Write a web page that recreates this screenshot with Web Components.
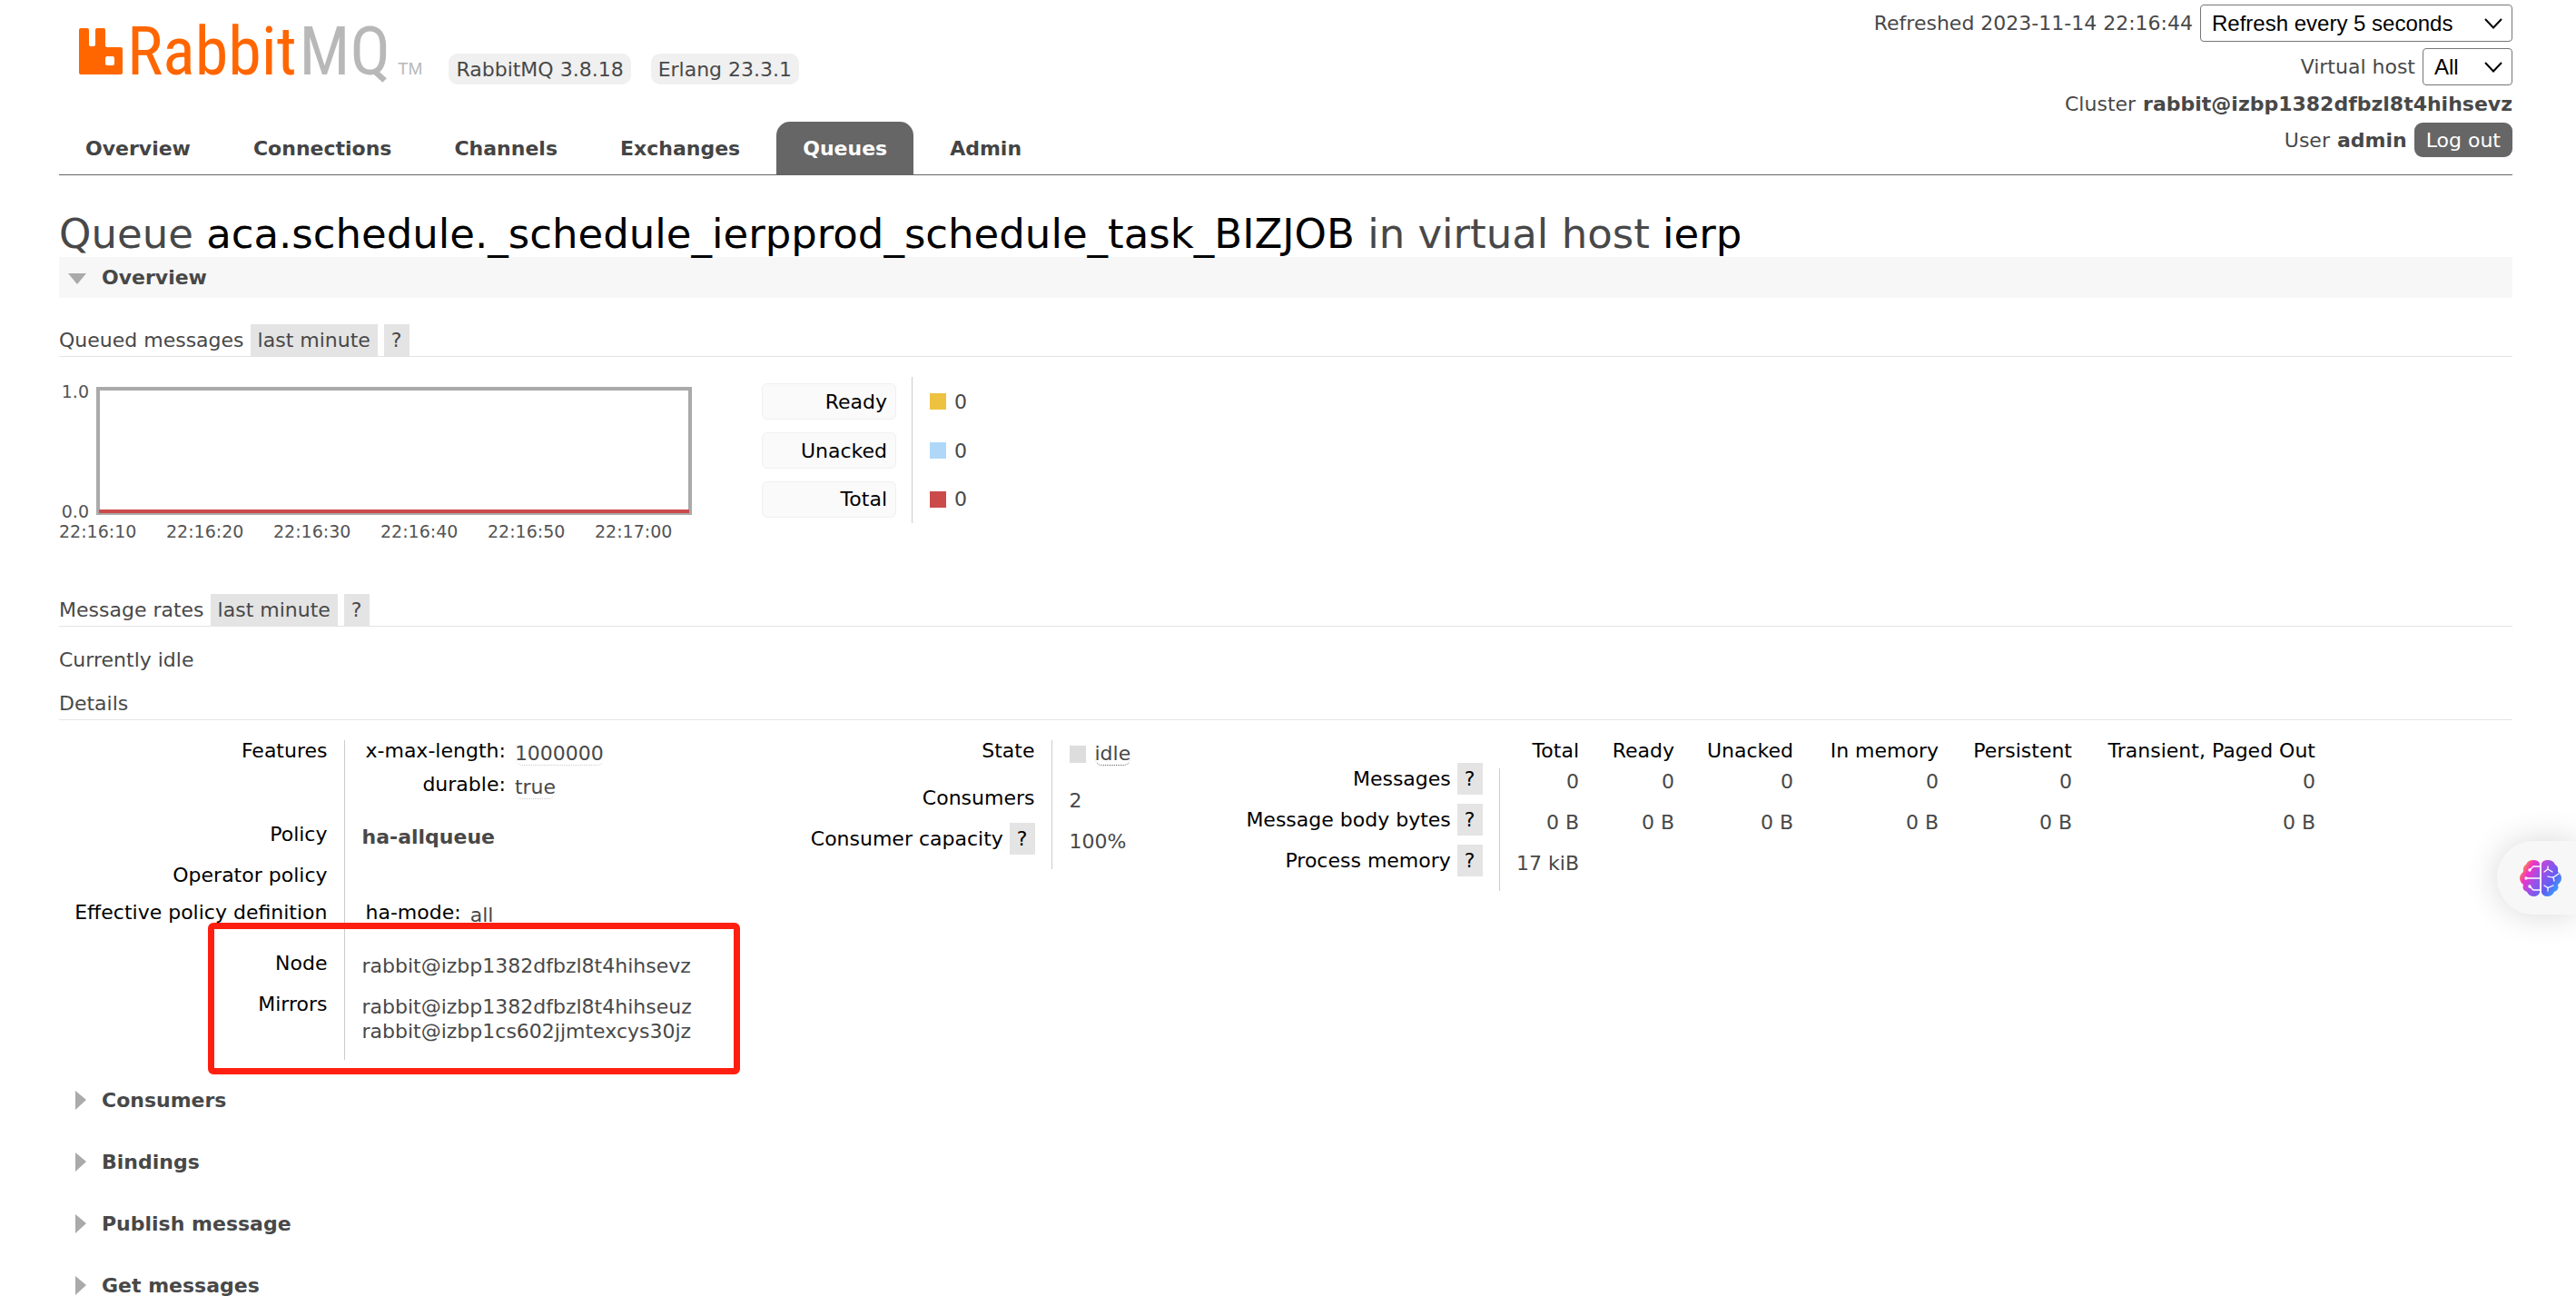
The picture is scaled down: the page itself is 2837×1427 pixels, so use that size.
<!DOCTYPE html>
<html lang="en">
<head>
<meta charset="utf-8">
<title>RabbitMQ Management</title>
<style>
html { scrollbar-width: none; }
body { margin: 0; background: #fff; color: #484848; font: 22px/27px "DejaVu Sans", Verdana, sans-serif; }
</style>
</head>
<body>
<rmq-page></rmq-page>
<rmq-assistant></rmq-assistant>

<script>
const define = (name, html) => {
  const tpl = document.createElement('template');
  tpl.innerHTML = html;
  customElements.define(name, class extends HTMLElement {
    constructor() {
      super();
      this.attachShadow({ mode: 'open' }).appendChild(tpl.content.cloneNode(true));
    }
  });
};

/* Small shared parts */
define('rmq-help', `
<style>
  :host { display: inline-block; margin: -6px 0; }
  button { display: block; margin: 0; padding: 4px 8px; border: 0; background: #e4e4e4; color: inherit; font: inherit; line-height: 27px; }
</style>
<button type="button"><slot>?</slot></button>`);

define('rmq-pill', `
<style>
  :host { display: block; padding: 4px 8px 3px; border-radius: 10px; background: #f0f0f0; }
</style>
<slot></slot>`);

define('rmq-tab', `
<style>
  :host { display: block; }
  a { display: block; padding: 16px 29px 15px; border-radius: 15px 15px 0 0; color: #444; font-weight: bold; text-decoration: none; }
  :host([selected]) a { background: #666; color: #fff; }
</style>
<a href="#"><slot></slot></a>`);

define('rmq-logo', `
<style>
  :host { display: flex; align-items: baseline; font: 74px/72px "Roboto Condensed", "Open Sans Condensed", sans-serif; color: #f60; }
  svg { width: 48px; height: 51px; margin-right: 5px; }
  span { margin-left: 3px; color: #b8b8b8; }
  small { margin-left: 8px; font: 19px/20px "Liberation Sans", Arial, sans-serif; color: #b8b8b8; }
</style>
<svg viewBox="0 0 48 51" aria-hidden="true"><path fill="#f60" fill-rule="evenodd" d="M2 0H9Q11 0 11 2V18Q11 20 13 20H16Q18 20 18 18V2Q18 0 20 0H27Q29 0 29 2V19Q29 21 31 21H46Q48 21 48 23V49Q48 51 46 51H2Q0 51 0 49V2Q0 0 2 0ZM31 31Q29 31 29 33V39Q29 41 31 41H37Q39 41 39 39V33Q39 31 37 31Z"/></svg>Rabbit<span>MQ</span><small>TM</small>`);

/* Account and refresh controls */
define('rmq-status', `
<style>
  :host { display: flex; flex-direction: column; align-items: flex-end; gap: 7px; padding: 5px 0 19px; }
  label, p { display: flex; align-items: center; gap: 8px; margin: 0; }
  .select { position: relative; width: 99px; }
  .wide { width: 344px; }
  select { display: block; width: 100%; height: 41px; margin: 0; padding: 0 12px; appearance: none; border: 1px solid #767676; border-radius: 4px; background: #fff; color: #000; font: 24px "Liberation Sans", Arial, sans-serif; }
  svg { position: absolute; right: 11px; top: 15px; width: 20px; height: 12px; pointer-events: none; }
  button { height: 38px; margin: 0; padding: 0 13px; border: 0; border-radius: 9px; background: #666; color: #fff; font: inherit; }
</style>
<label>Refreshed 2023-11-14 22:16:44
  <span class="select wide"><select><option>Refresh every 5 seconds</option><option>Refresh every 10 seconds</option><option>Do not refresh</option></select>
  <svg viewBox="0 0 20 12"><path d="M1 1L10 10.5L19 1" fill="none" stroke="#000" stroke-width="2"/></svg></span>
</label>
<label>Virtual host
  <span class="select"><select><option>All</option><option>ierp</option></select>
  <svg viewBox="0 0 20 12"><path d="M1 1L10 10.5L19 1" fill="none" stroke="#000" stroke-width="2"/></svg></span>
</label>
<p>Cluster <b>rabbit@izbp1382dfbzl8t4hihsevz</b></p>
<p>User <b>admin</b> <button type="button">Log out</button></p>`);

define('rmq-header', `
<style>
  :host { display: flex; justify-content: space-between; border-bottom: 1px solid #666; }
  .left { display: flex; flex-direction: column; justify-content: space-between; }
  .brand { display: flex; align-items: flex-end; gap: 22px; padding: 21px 0 0 22px; }
  .brand rmq-logo { margin-right: 7px; }
  nav { display: flex; gap: 11px; }
</style>
<div class="left">
  <div class="brand"><rmq-logo></rmq-logo><rmq-pill>RabbitMQ 3.8.18</rmq-pill><rmq-pill>Erlang 23.3.1</rmq-pill></div>
  <nav>
    <rmq-tab>Overview</rmq-tab><rmq-tab>Connections</rmq-tab><rmq-tab>Channels</rmq-tab><rmq-tab>Exchanges</rmq-tab><rmq-tab selected>Queues</rmq-tab><rmq-tab>Admin</rmq-tab>
  </nav>
</div>
<rmq-status></rmq-status>`);

/* Collapsible section heading */
define('rmq-section', `
<style>
  :host { display: block; }
  h2 { margin: 0; font: inherit; }
  button { display: flex; align-items: center; width: 100%; height: 45px; margin: 0; padding: 0 0 0 10px; border: 0; background: none; color: inherit; font: bold 22px/45px "DejaVu Sans", Verdana, sans-serif; text-align: left; }
  svg { width: 20px; height: 22px; margin-right: 17px; fill: #aaa; }
  .down { display: none; }
  :host([open]) button { background: #f7f7f7; }
  :host([open]) .down { display: block; }
  :host([open]) .right { display: none; }
</style>
<h2><button type="button">
  <svg class="right" viewBox="0 0 20 22"><path d="M8 0L20 10L8 21Z"/></svg>
  <svg class="down" viewBox="0 0 20 22"><path d="M0 6H20L10 18Z"/></svg>
  <slot name="title"></slot>
</button></h2>
<slot></slot>`);

define('rmq-subheading', `
<style>
  :host { display: flex; align-items: center; gap: 7px; height: 35px; border-bottom: 1px solid #e4e4e4; }
</style>
<slot></slot>`);

/* Queue length chart */
define('queue-chart', `
<style>
  :host { display: block; }
  svg { display: block; width: 698px; height: 185px; overflow: visible; }
  text { font: 19px "DejaVu Sans", Verdana, sans-serif; fill: #545454; }
</style>
<svg viewBox="0 0 698 185" role="img" aria-label="Queued messages">
  <text x="33" y="23" text-anchor="end">1.0</text>
  <text x="33" y="155" text-anchor="end">0.0</text>
  <rect x="43" y="13" width="652" height="137" fill="#fff" stroke="#aaa" stroke-width="4"/>
  <path d="M44 148H694" stroke="#cb4b4b" stroke-width="4"/>
  <text x="0" y="177">22:16:10</text><text x="118" y="177">22:16:20</text><text x="236" y="177">22:16:30</text>
  <text x="354" y="177">22:16:40</text><text x="472" y="177">22:16:50</text><text x="590" y="177">22:17:00</text>
</svg>`);

define('queue-legend', `
<style>
  :host { display: block; }
  table { border-collapse: collapse; }
  tr { height: 54px; }
  tr:last-child { height: 53px; }
  th, td { padding: 0; vertical-align: middle; }
  th { padding-right: 17px; border-right: 1px solid #ccc; font-weight: normal; color: #000; }
  button { display: block; width: 148px; height: 40px; margin: 0; padding: 0 9px; border: 1px solid #f0f0f0; border-radius: 6px; background: #fafafa; color: #000; font: inherit; text-align: right; }
  td { padding-left: 19px; }
  td span { display: flex; align-items: center; gap: 9px; }
  i { width: 18px; height: 18px; background: #edc240; }
  .unacked { background: #afd8f8; }
  .total { background: #cb4b4b; }
</style>
<table>
  <tr><th scope="row"><button type="button">Ready</button></th><td><span><i></i>0</span></td></tr>
  <tr><th scope="row"><button type="button">Unacked</button></th><td><span><i class="unacked"></i>0</span></td></tr>
  <tr><th scope="row"><button type="button">Total</button></th><td><span><i class="total"></i>0</span></td></tr>
</table>`);

/* Fact tables */
const factStyles = `
  :host { display: block; }
  table { border-collapse: collapse; line-height: 24px; }
  th, td { padding: 0; vertical-align: top; white-space: nowrap; }
  th { color: #000; font-weight: normal; text-align: right; }
  tbody th { box-sizing: border-box; min-width: 314px; padding-right: 18px; border-right: 1px solid #ccc; }
  tbody td { padding: 3px 0 0 19px; }
  abbr { border-bottom: 1px dotted #ccc; border-radius: 8px; text-decoration: none; }
`;

define('queue-config', `
<style>${factStyles}
  dl { display: grid; grid-template-columns: auto auto; justify-content: start; column-gap: 10px; margin: -3px 0 0 4px; }
  dt { color: #000; text-align: right; }
  dd { margin: 0; padding: 3px 0 10px; }
  .features { height: 92px; } .policy { height: 45px; } .operator { height: 41px; }
  .effective { height: 56px; } .node { height: 45px; } .mirrors { height: 73px; }
  .mirrors td { line-height: 27px; padding-top: 1px; }
</style>
<table><tbody>
  <tr class="features"><th scope="row">Features</th><td><dl><dt>x-max-length:</dt><dd><abbr>1000000</abbr></dd><dt>durable:</dt><dd><abbr>true</abbr></dd></dl></td></tr>
  <tr class="policy"><th scope="row">Policy</th><td><b>ha-allqueue</b></td></tr>
  <tr class="operator"><th scope="row">Operator policy</th><td></td></tr>
  <tr class="effective"><th scope="row">Effective policy definition</th><td><dl><dt>ha-mode:</dt><dd><abbr>all</abbr></dd></dl></td></tr>
  <tr class="node"><th scope="row">Node</th><td>rabbit@izbp1382dfbzl8t4hihsevz</td></tr>
  <tr class="mirrors"><th scope="row">Mirrors</th><td>rabbit@izbp1382dfbzl8t4hihseuz<br>rabbit@izbp1cs602jjmtexcys30jz</td></tr>
</tbody></table>`);

define('queue-state', `
<style>${factStyles}
  tr { height: 45px; }
  .state { height: 52px; }
  td span { display: flex; align-items: center; gap: 10px; }
  i { width: 18px; height: 19px; background: #ddd; }
  .state abbr { border-bottom-color: #666; }
</style>
<table><tbody>
  <tr class="state"><th scope="row">State</th><td><span><i></i><abbr>idle</abbr></span></td></tr>
  <tr><th scope="row">Consumers</th><td>2</td></tr>
  <tr><th scope="row">Consumer capacity <rmq-help></rmq-help></th><td>100%</td></tr>
</tbody></table>`);

define('queue-messages', `
<style>${factStyles}
  table { table-layout: fixed; width: 1232px; }
  thead tr { height: 31px; }
  thead th { padding-right: 19px; }
  tbody tr { height: 45px; }
  tbody td { padding: 3px 19px 0 0; text-align: right; }
  .label { width: 314px; } .c1 { width: 107px; } .c2 { width: 105px; } .c3 { width: 131px; }
  .c4 { width: 160px; } .c5 { width: 147px; } .c6 { width: 268px; }
</style>
<table>
  <colgroup><col class="label"><col class="c1"><col class="c2"><col class="c3"><col class="c4"><col class="c5"><col class="c6"></colgroup>
  <thead><tr><td></td><th scope="col">Total</th><th scope="col">Ready</th><th scope="col">Unacked</th><th scope="col">In memory</th><th scope="col">Persistent</th><th scope="col">Transient, Paged Out</th></tr></thead>
  <tbody>
    <tr><th scope="row">Messages <rmq-help></rmq-help></th><td>0</td><td>0</td><td>0</td><td>0</td><td>0</td><td>0</td></tr>
    <tr><th scope="row">Message body bytes <rmq-help></rmq-help></th><td>0 B</td><td>0 B</td><td>0 B</td><td>0 B</td><td>0 B</td><td>0 B</td></tr>
    <tr><th scope="row">Process memory <rmq-help></rmq-help></th><td>17 kiB</td><td></td><td></td><td></td><td></td><td></td></tr>
  </tbody>
</table>`);

/* Red frame drawn over the node and mirror rows */
define('rmq-marker', `
<style>
  :host { position: absolute; left: 164px; top: 223px; box-sizing: border-box; width: 586px; height: 167px; border: 7px solid #ff1f10; border-radius: 6px; pointer-events: none; }
</style>`);

define('queue-details', `
<style>
  :host { display: grid; grid-template-columns: 779px 493px auto; justify-content: start; align-items: start; position: relative; padding-top: 22px; }
</style>
<queue-config></queue-config>
<queue-state></queue-state>
<queue-messages></queue-messages>
<rmq-marker></rmq-marker>`);

define('rmq-page', `
<style>
  :host { display: block; padding: 0 70px 0 65px; }
  h1 { margin: 40px 0 0; font: 45px/50px "DejaVu Sans", Verdana, sans-serif; }
  h1 b { color: #000; font-weight: normal; }
  .queued { margin-top: 29px; }
  .charts { display: flex; align-items: flex-start; gap: 76px; padding: 22px 0 54px; }
  p { margin: 23px 0 17px; }
  .more { display: grid; gap: 23px; padding: 22px 0 30px; }
</style>
<rmq-header></rmq-header>
<h1>Queue <b>aca.schedule._schedule_ierpprod_schedule_task_BIZJOB</b> in virtual host <b>ierp</b></h1>
<rmq-section open><span slot="title">Overview</span>
  <rmq-subheading class="queued">Queued messages <rmq-help>last minute</rmq-help><rmq-help></rmq-help></rmq-subheading>
  <div class="charts"><queue-chart></queue-chart><queue-legend></queue-legend></div>
  <rmq-subheading>Message rates <rmq-help>last minute</rmq-help><rmq-help></rmq-help></rmq-subheading>
  <p>Currently idle</p>
  <rmq-subheading>Details</rmq-subheading>
  <queue-details></queue-details>
</rmq-section>
<div class="more">
  <rmq-section><span slot="title">Consumers</span></rmq-section>
  <rmq-section><span slot="title">Bindings</span></rmq-section>
  <rmq-section><span slot="title">Publish message</span></rmq-section>
  <rmq-section><span slot="title">Get messages</span></rmq-section>
</div>`);

/* Floating assistant handle */
define('rmq-assistant', `
<style>
  :host { position: fixed; right: 0; top: 926px; }
  button { display: flex; align-items: center; width: 87px; height: 81px; margin: 0; padding: 0 0 0 25px; border: 0; border-radius: 40px 0 0 40px; background: #f7f7f7; box-shadow: 0 0 36px rgba(0, 0, 0, .16); }
  svg { width: 46px; height: 42px; }
</style>
<button type="button" aria-label="Assistant">
<svg viewBox="0 0 46 42">
  <defs>
    <linearGradient id="l" x1="0" y1="0" x2="1" y2="1"><stop offset=".1" stop-color="#ffa014"/><stop offset=".38" stop-color="#f032c8"/><stop offset=".65" stop-color="#a050e6"/><stop offset="1" stop-color="#6464f5"/></linearGradient>
    <linearGradient id="r" x1="0" y1="0" x2=".8" y2="1"><stop offset="0" stop-color="#cd46d7"/><stop offset=".6" stop-color="#5f5ff5"/><stop offset="1" stop-color="#32b4ff"/></linearGradient>
  </defs>
  <path fill="url(#l)" d="M22 5Q21 1 15 1Q9 1 7 6Q3 8 4 14Q0 17 0 21Q0 25 4 28Q2 34 8 36Q10 41 16 41Q20 41 22 37Z"/>
  <path fill="url(#r)" d="M24 5Q25 1 31 1Q37 1 39 6Q43 8 42 14Q46 17 46 21Q46 25 42 28Q44 34 38 36Q36 41 30 41Q26 41 24 37Z"/>
  <g fill="none" stroke="#fff" stroke-width="1.3" stroke-linecap="round"><path d="M22 8H15L11 12M22 21H7M22 34H15L11 30M31 8V11L27 14M31 11L36 14M31 19Q34 20 37 20L43 16M37 20L38 24M27 29L31 31.500L37 29M31 31.500V35"/></g>
  <g fill="#fff"><circle cx="11" cy="12" r="1.700"/><circle cx="7" cy="21" r="1.700"/><circle cx="11" cy="30" r="1.700"/></g>
</svg>
</button>`);
</script>
</body>
</html>
